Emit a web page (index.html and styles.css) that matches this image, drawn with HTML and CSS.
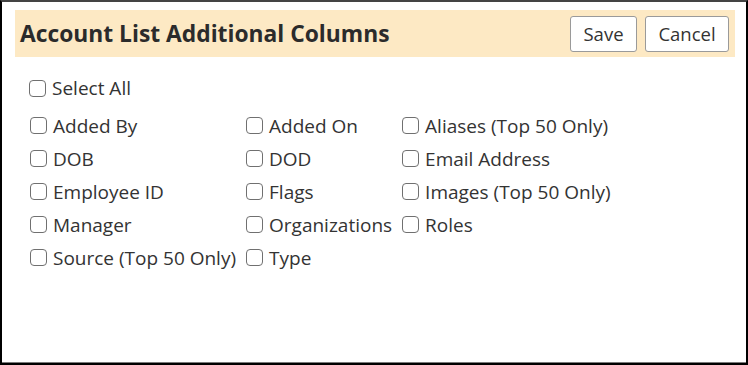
FILE: index.html
```html
<!DOCTYPE html>
<html>
<head>
    <title>Account List Additional Columns</title>
    <meta name="viewport" content="width=device-width, initial-scale=1.0">
    <link rel="stylesheet" href="styles.css">
</head>
<body>
    <div class="frame">
        <div class="dialog">
            <div class="titlebar">
                <h2>Account List Additional Columns</h2>
                <div class="actions">
                    <button class="btn save">Save</button>
                    <button class="btn cancel">Cancel</button>
                </div>
            </div>

            <label class="opt selectall"><input type="checkbox">Select All</label>

            <div class="columns">
                <label class="opt"><input type="checkbox">Added By</label>
                <label class="opt"><input type="checkbox">Added On</label>
                <label class="opt"><input type="checkbox">Aliases (Top 50 Only)</label>

                <label class="opt"><input type="checkbox">DOB</label>
                <label class="opt"><input type="checkbox">DOD</label>
                <label class="opt"><input type="checkbox">Email Address</label>

                <label class="opt"><input type="checkbox">Employee ID</label>
                <label class="opt"><input type="checkbox">Flags</label>
                <label class="opt"><input type="checkbox">Images (Top 50 Only)</label>

                <label class="opt"><input type="checkbox">Manager</label>
                <label class="opt"><input type="checkbox">Organizations</label>
                <label class="opt"><input type="checkbox">Roles</label>

                <label class="opt"><input type="checkbox">Source (Top 50 Only)</label>
                <label class="opt"><input type="checkbox">Type</label>
            </div>
        </div>
    </div>
</body>
</html>
```

FILE: styles.css
```css
html, body {
    margin: 0;
    padding: 0;
    background: #fff;
}

body {
    font-family: "Open Sans", "Noto Sans", sans-serif;
    color: #333;
}

.frame {
    width: 748px;
    height: 365px;
    box-sizing: border-box;
    border: 2px solid #000;
    border-top-color: #444;
}

.dialog {
    height: 100%;
    box-sizing: border-box;
    border-bottom: 1px solid #7a7a7a;
    padding: 8px 11px 0 13px;
}

.titlebar {
    display: flex;
    align-items: center;
    justify-content: space-between;
    background-color: #fde9c4;
    height: 47px;
    padding: 0 6px 0 5px;
}

.titlebar h2 {
    margin: 0;
    font-size: 22.8px;
    font-weight: bold;
    color: #2b2b2b;
}

.actions {
    display: flex;
    gap: 8px;
}

.btn {
    font-family: inherit;
    font-size: 18.5px;
    color: #333;
    background: #fff;
    border: 1px solid #9a9a9a;
    border-radius: 3px;
    height: 36px;
    padding: 0;
}

.save {
    width: 67px;
}

.cancel {
    width: 84px;
}

.opt {
    display: flex;
    align-items: center;
    font-size: 19px;
    white-space: nowrap;
}

.opt input {
    appearance: none;
    -webkit-appearance: none;
    width: 17px;
    height: 17px;
    margin: 0 6px 0 0;
    border: 1px solid #707070;
    border-radius: 4px;
    background: #fff;
}

.selectall {
    margin: 14px 0 0 14px;
    height: 34px;
}

.columns {
    display: grid;
    grid-template-columns: auto auto auto;
    justify-content: start;
    column-gap: 10px;
    grid-auto-rows: 33px;
    margin: 4px 0 0 15px;
}
```
